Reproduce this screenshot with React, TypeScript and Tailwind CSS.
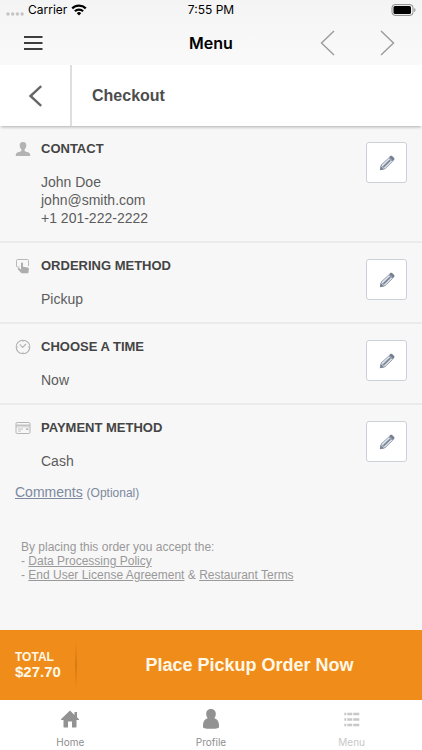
import type { ReactNode } from "react";

const ContactIcon = () => (
  <svg viewBox="0 0 16 16" className="size-4" fill="#b3b3b3" aria-hidden="true">
    <path d="M8 1C5.600 1 4.500 2.500 4.700 4.700c.1 1.500.8 2.900 1.700 3.600v1.400c-.7.9-2 1.100-3.500 1.600C1.400 11.800.7 12.600.7 15h14.600c0-2.400-.7-3.200-2.200-3.700-1.500-.5-2.800-.7-3.500-1.600V8.300c.9-.7 1.600-2.100 1.700-3.600C11.500 2.500 10.400 1 8 1Z" />
  </svg>
);

const TouchIcon = () => (
  <svg viewBox="0 0 16 16" className="size-4" aria-hidden="true">
    <path d="M4.500 9H2.500A1 1 0 0 1 1.500 8V2.500a1 1 0 0 1 1-1h10a1 1 0 0 1 1 1V8" fill="none" stroke="#b8b8b8" />
    <path d="M6 5.500c0-1.400 2-1.400 2 0v3.200l4.700.9c.9.200 1.300.8 1.200 1.600l-.6 4.100H6.500L3 11.500c-.7-.9.400-1.900 1.300-1.200L6 11.500Z" fill="#adadad" />
  </svg>
);

const ClockIcon = () => (
  <svg viewBox="0 0 16 16" className="size-4" fill="none" stroke="#b0b0b0" aria-hidden="true">
    <circle cx="8" cy="8" r="6.800" strokeWidth="1.100" />
    <path d="M4.800 5.300 7.600 8.500 11 5" strokeWidth="1.100" />
    <path d="M8 2v1.200M8 12.800V14M2 8h1.200M12.800 8H14" strokeWidth="0.800" />
  </svg>
);

const CardIcon = () => (
  <svg viewBox="0 0 16 16" className="size-4" fill="none" stroke="#b5b5b5" aria-hidden="true">
    <rect x="1" y="2.500" width="14" height="11" rx="1.200" />
    <path d="M1 5.300h14" strokeWidth="1.600" stroke="#c2c2c2" />
    <path d="M1 6.900h14" strokeWidth="0.600" />
    <path d="M3 9h5M3 11h3" strokeWidth="0.800" />
    <path d="M11 9.200h2.500" strokeWidth="1.500" />
  </svg>
);

const PencilIcon = () => (
  <svg viewBox="0 0 16 16" className="size-4" aria-hidden="true">
    <path d="m.8 15.200.7-4.700 4 4Z" fill="#7a8596" />
    <path d="m2 10.100 7.900-7.200 3.600 3.600-7.700 7.500Z" fill="#dfe3ea" stroke="#8f99a9" strokeWidth="0.900" />
    <path d="m4.400 11.900 6.900-6.800" stroke="#7a8596" strokeWidth="1.700" />
    <path d="m10 2.300 1.300-1.200c.6-.5 1.300-.5 1.800 0l2 2c.5.5.5 1.200 0 1.800l-1.200 1.300Z" fill="#747f91" />
  </svg>
);

type StepProps = {
  icon: ReactNode;
  title: string;
  lines: string[];
  last?: boolean;
};

const Step = ({ icon, title, lines, last }: StepProps) => (
  <section
    className={
      last
        ? "flex items-start px-[15px] pt-4"
        : "flex items-start border-b-2 border-[#ebebeb] px-[15px] pt-4 pb-[14px]"
    }
  >
    <div className="flex-1">
      <div className="-mt-[3px] flex h-5 items-center gap-[10px]">
        {icon}
        <h2 className="text-[13px] leading-5 font-bold text-[#444444]">{title}</h2>
      </div>
      <div className="mt-[14px] pl-[26px] text-sm leading-[18px] text-[#5c5c5c]">
        {lines.map((line) => (
          <p key={line}>{line}</p>
        ))}
      </div>
    </div>
    <button
      type="button"
      aria-label={`Edit ${title.toLowerCase()}`}
      className="-mb-2 flex size-[41px] items-center justify-center rounded-[3px] border border-[#ccd0d9] bg-white"
    >
      <PencilIcon />
    </button>
  </section>
);

const App = () => {
  return (
    <div className="flex min-h-screen flex-col bg-[#f7f7f7] font-['Liberation_Sans',Arial,sans-serif]">
      {/* Status bar and navigation */}
      <header className="bg-linear-to-b from-[#f4f4f4] to-[#fafafa] font-['Inter',sans-serif] text-black">
        <div className="grid h-5 grid-cols-3 items-center px-[6px] text-xs">
          <div className="flex items-center gap-1">
            <svg viewBox="0 0 18 4" className="mt-2 h-1 w-[18px]" fill="#c4c4c4" aria-hidden="true">
              <circle cx="2" cy="2" r="1.700" />
              <circle cx="6.700" cy="2" r="1.700" />
              <circle cx="11.400" cy="2" r="1.700" />
              <circle cx="16.100" cy="2" r="1.700" />
            </svg>
            <span>Carrier</span>
            <svg viewBox="0 0 16 12" className="h-3 w-4" fill="none" stroke="#000" strokeWidth="2.200" aria-hidden="true">
              <path d="M1.200 4.400a9.700 9.700 0 0 1 13.600 0M3.900 7.200a5.900 5.900 0 0 1 8.200 0" />
              <path d="m5.800 9.200 2.200 2.300 2.200-2.300a3.100 3.100 0 0 0-4.400 0Z" fill="#000" stroke="none" />
            </svg>
          </div>
          <span className="text-center">7:55 PM</span>
          <svg viewBox="0 0 25 12" className="h-3 w-[25px] justify-self-end" aria-hidden="true">
            <rect x="1" y="0.600" width="21" height="10.800" rx="3" fill="none" stroke="#8a8a8a" />
            <rect x="2.500" y="2.100" width="17.500" height="7.800" rx="1.500" fill="#000" />
            <path d="M23.300 4v4c1.600-.6 1.600-3.400 0-4Z" fill="#8a8a8a" />
          </svg>
        </div>
        <nav className="grid h-[45px] grid-cols-3 items-center px-6">
          <button type="button" aria-label="Open menu" className="justify-self-start">
            <svg viewBox="0 0 19 16" className="h-4 w-[19px]" stroke="#000" strokeWidth="1.700" aria-hidden="true">
              <path d="M0 2h18.500M0 8h18.500M0 14h18.500" />
            </svg>
          </button>
          <h1 className="text-center text-base font-semibold">Menu</h1>
          <div className="flex gap-[42px] justify-self-end">
            <button type="button" aria-label="Previous">
              <svg viewBox="0 0 18 26" className="h-[26px] w-[18px]" fill="none" stroke="#9b9b9b" strokeWidth="1.400" aria-hidden="true">
                <path d="M14 1 1.500 13 14 25" />
              </svg>
            </button>
            <button type="button" aria-label="Next">
              <svg viewBox="0 0 18 26" className="h-[26px] w-[18px]" fill="none" stroke="#9b9b9b" strokeWidth="1.400" aria-hidden="true">
                <path d="M1 1 13.500 13 1 25" />
              </svg>
            </button>
          </div>
        </nav>
      </header>

      {/* Page title */}
      <div className="flex h-[61px] bg-white shadow-[0_2px_3px_-1px_rgba(0,0,0,0.3)]">
        <button
          type="button"
          aria-label="Back"
          className="flex w-[72px] items-center justify-center border-r-2 border-[#dedede]"
        >
          <svg viewBox="0 0 14 22" className="h-[22px] w-[14px]" fill="none" stroke="#666666" strokeWidth="2.400" aria-hidden="true">
            <path d="M13.200 1.200 2.500 11l10.700 9.800" />
          </svg>
        </button>
        <h2 className="self-center pl-5 text-base font-bold text-[#4d4d4d]">Checkout</h2>
      </div>

      {/* Order details */}
      <main className="flex-1">
        <Step
          icon={<ContactIcon />}
          title="CONTACT"
          lines={["John Doe", "john@smith.com", "+1 201-222-2222"]}
        />
        <Step icon={<TouchIcon />} title="ORDERING METHOD" lines={["Pickup"]} />
        <Step icon={<ClockIcon />} title="CHOOSE A TIME" lines={["Now"]} />
        <Step icon={<CardIcon />} title="PAYMENT METHOD" lines={["Cash"]} last />

        <p className="mt-3 pl-[15px] text-sm text-[#7c899e]">
          <a href="#comments" className="underline">
            Comments
          </a>{" "}
          <span className="text-xs">(Optional)</span>
        </p>

        <div className="mt-[38px] px-[21px] pb-6 text-xs leading-[14px] text-[#999999]">
          <p>By placing this order you accept the:</p>
          <p>
            -{" "}
            <a href="#data-policy" className="underline">
              Data Processing Policy
            </a>
          </p>
          <p>
            -{" "}
            <a href="#license" className="underline">
              End User License Agreement
            </a>{" "}
            &amp;{" "}
            <a href="#terms" className="underline">
              Restaurant Terms
            </a>
          </p>
        </div>
      </main>

      {/* Total and submit */}
      <button type="button" className="flex h-[70px] items-center bg-[#f08c1a] text-left font-bold text-[#fff8e8]">
        <span className="flex w-[75px] flex-col pl-[15px]">
          <span className="text-xs leading-[14px]">TOTAL</span>
          <span className="text-[15px] leading-4">$27.70</span>
        </span>
        <span className="h-12 w-[2px] bg-linear-to-b from-transparent via-[#d97a12] to-transparent" />
        <span className="flex-1 text-center text-lg">Place Pickup Order Now</span>
      </button>

      {/* Tab bar */}
      <nav className="grid h-[50px] grid-cols-3 bg-white font-['Inter',sans-serif] text-[10px] leading-3 text-[#8e8e8e]">
        <a href="#home" className="flex flex-col items-center gap-[7px] pt-[9px]">
          <svg viewBox="0 0 20 20" className="size-5" fill="#929292" aria-hidden="true">
            <path d="M10 1.500 1.200 10c-.5.600-.2 1 .4 1H3.500v6.500c0 .7.300 1 1 1H8v-6h4v6h3.500c.7 0 1-.3 1-1V11h1.900c.6 0 .9-.4.400-1l-1.800-1.700V3h-2.500v2.900Z" />
          </svg>
          Home
        </a>
        <a href="#profile" className="flex flex-col items-center gap-[7px] pt-[9px]">
          <svg viewBox="0 0 20 20" className="size-5" fill="#929292" aria-hidden="true">
            <path d="M10 0C7.300 0 5.200 2 5.200 4.700c0 1.700.5 3.200 1.500 4.500C4 9.900 2 12.500 2 16v2c0 1 1.500 1.800 8 1.800s8-.8 8-1.800v-2c0-3.500-2-6.100-4.700-6.800 1-1.300 1.500-2.800 1.500-4.500C14.800 2 12.700 0 10 0Z" />
          </svg>
          Profile
        </a>
        <a href="#menu" aria-current="page" className="flex flex-col items-center gap-[7px] pt-[9px] text-[#c8c8c8]">
          <svg viewBox="0 0 20 20" className="size-5" stroke="#c8c8c8" strokeWidth="2.400" aria-hidden="true">
            <path d="M2.300 5h2M5.300 5h5M11.300 5h6M2.300 10.500h2M5.300 10.500h5M11.300 10.500h6M2.300 16h2M5.300 16h5M11.300 16h6" />
          </svg>
          Menu
        </a>
      </nav>
    </div>
  );
};

export default App;
